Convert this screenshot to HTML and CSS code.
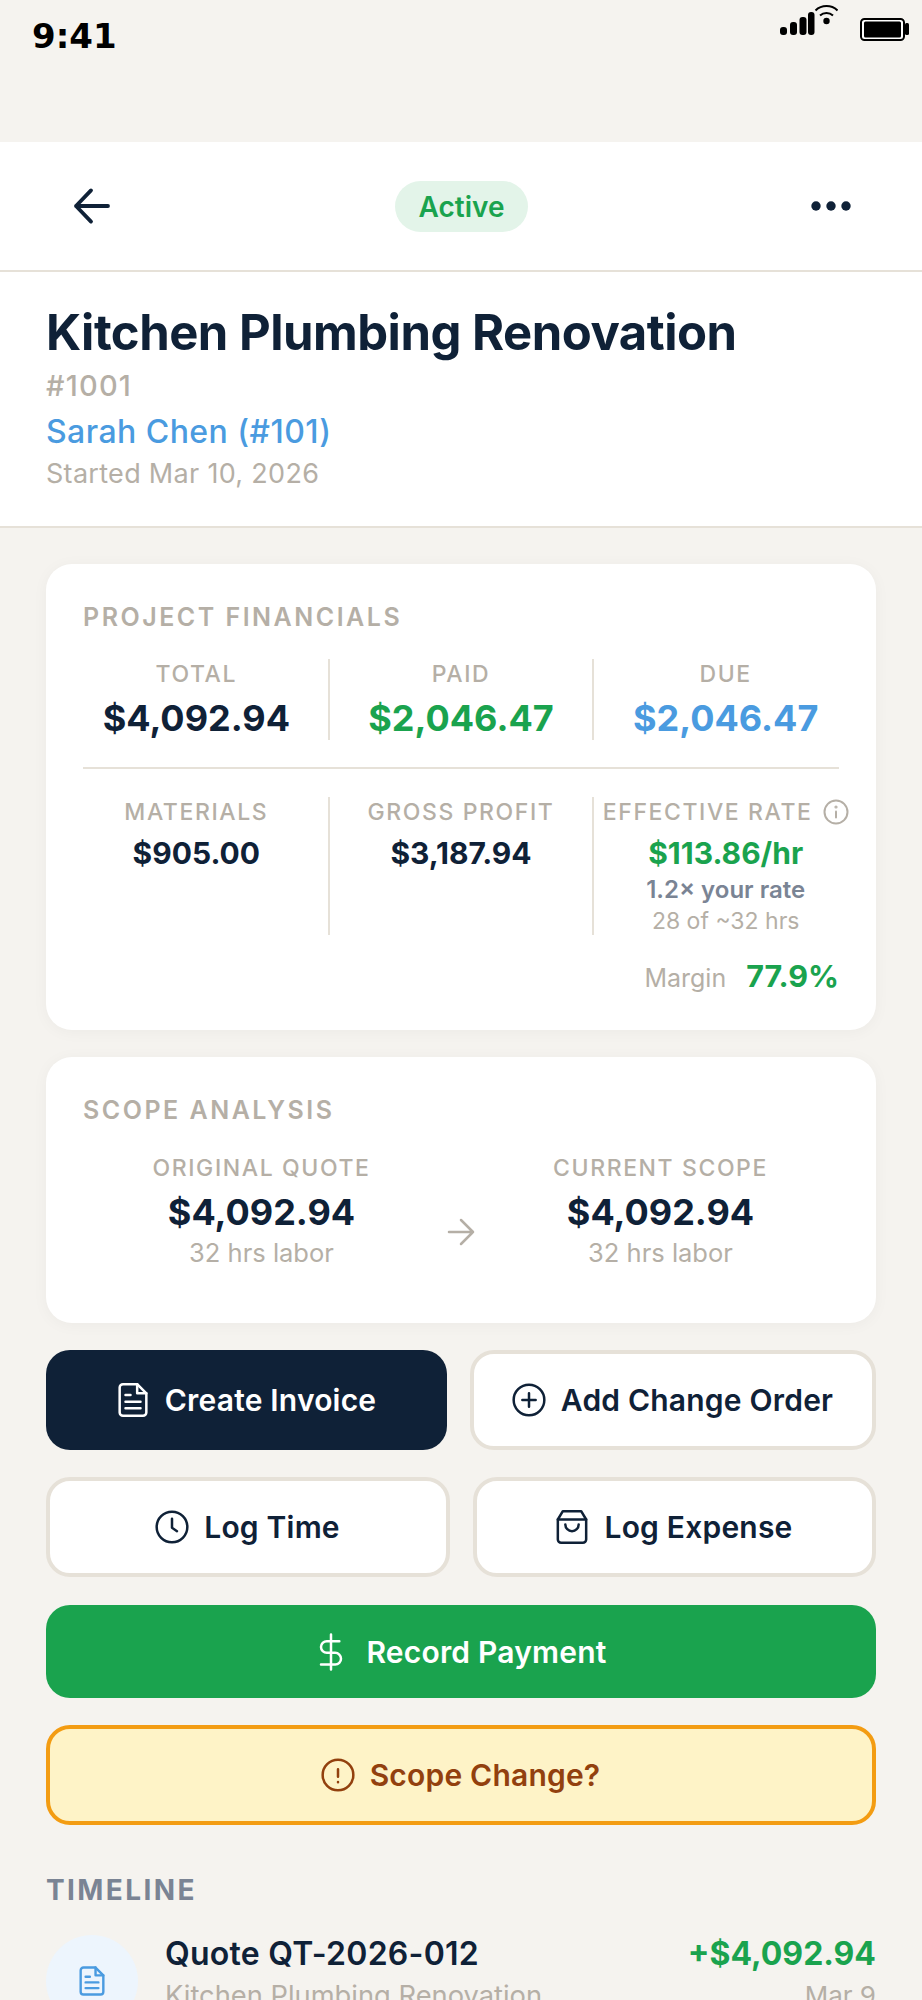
FILE: index.html
```html
<!DOCTYPE html>
<html lang="en">
<head>
<meta charset="utf-8">
<title>Kitchen Plumbing Renovation</title>
<link rel="stylesheet" href="styles.css">
</head>
<body>
<div class="screen">
  <div class="status">
    <span class="time">9:41</span>
    <div class="status-icons">
      <svg class="signal" width="58" height="32" viewBox="0 0 58 32"><g fill="#000"><rect x="0" y="23" width="7" height="8" rx="3"/><rect x="10" y="18" width="7" height="13" rx="3"/><rect x="19.500" y="13" width="7" height="18" rx="3"/><rect x="28" y="8" width="6.500" height="23" rx="3"/></g><g fill="none" stroke="#000" stroke-width="2"><path d="M35.500 6.500a16 16 0 0 1 22 0"/><path d="M40 11.500a9.500 9.500 0 0 1 13 0"/></g><circle cx="46.500" cy="17" r="3.200" fill="#000"/></svg>
      <svg class="battery" width="49" height="23" viewBox="0 0 49 23"><rect x="1" y="1" width="43" height="21" rx="3.500" fill="#fff" stroke="#000" stroke-width="2"/><rect x="4" y="3.500" width="37" height="16" rx="1.500" fill="#000"/><rect x="45" y="5" width="4" height="12" rx="1.500" fill="#000"/></svg>
    </div>
  </div>

  <nav class="nav">
    <svg class="nav-icon" width="48" height="48" viewBox="0 0 24 24" fill="none" stroke="#0F2137" stroke-width="1.900" stroke-linecap="round" stroke-linejoin="round"><path d="M20 12H4M11.500 4.200L4 12l7.500 7.800"/></svg>
    <span class="pill">Active</span>
    <svg class="nav-icon" width="48" height="48" viewBox="0 0 48 48" fill="#0F2137"><circle cx="9" cy="24" r="4.700"/><circle cx="24" cy="24" r="4.700"/><circle cx="39" cy="24" r="4.700"/></svg>
  </nav>

  <header class="head">
    <h1 class="title">Kitchen Plumbing Renovation</h1>
    <div class="ref">#1001</div>
    <div class="client">Sarah Chen (#101)</div>
    <div class="started">Started Mar 10, 2026</div>
  </header>

  <main class="content">
    <section class="card fin">
      <h2 class="card-label">PROJECT FINANCIALS</h2>
      <div class="fin-row">
        <div class="cell"><div class="lab">TOTAL</div><div class="big">$4,092.94</div></div>
        <div class="cell"><div class="lab">PAID</div><div class="big green">$2,046.47</div></div>
        <div class="cell"><div class="lab">DUE</div><div class="big blue">$2,046.47</div></div>
      </div>
      <div class="rule"></div>
      <div class="fin-row">
        <div class="cell"><div class="lab">MATERIALS</div><div class="mid">$905.00</div></div>
        <div class="cell"><div class="lab">GROSS PROFIT</div><div class="mid">$3,187.94</div></div>
        <div class="cell"><div class="lab lab-info">EFFECTIVE RATE<svg class="info" width="26" height="26" viewBox="0 0 26 26" fill="none" stroke="#B5AFA6" stroke-width="2" stroke-linecap="round"><circle cx="13" cy="13" r="11.500"/><path d="M13 12.500v6"/><circle cx="13" cy="8" r=".6"/></svg></div><div class="mid green">$113.86/hr</div><div class="rate">1.2× your rate</div><div class="hrs">28 of ~32 hrs</div></div>
      </div>
      <div class="margin"><span class="margin-lab">Margin</span><span class="margin-val">77.9%</span></div>
    </section>

    <section class="card scope">
      <h2 class="card-label">SCOPE ANALYSIS</h2>
      <div class="scope-row">
        <div class="scope-col"><div class="lab">ORIGINAL QUOTE</div><div class="big">$4,092.94</div><div class="sub">32 hrs labor</div></div>
        <svg class="scope-arrow" width="36" height="36" viewBox="0 0 24 24" fill="none" stroke="#B5AFA6" stroke-width="1.700" stroke-linecap="round" stroke-linejoin="round"><path d="M4 12h16M12 4l8 8-8 8"/></svg>
        <div class="scope-col"><div class="lab">CURRENT SCOPE</div><div class="big">$4,092.94</div><div class="sub">32 hrs labor</div></div>
      </div>
    </section>

    <div class="btn-row row-a">
      <button class="btn dark"><svg width="40" height="40" viewBox="0 0 24 24" fill="none" stroke="#fff" stroke-width="1.500" stroke-linecap="round" stroke-linejoin="round"><path d="M14.500 2.500H6a2 2 0 0 0-2 2v15a2 2 0 0 0 2 2h12a2 2 0 0 0 2-2V8z"/><path d="M14.500 2.500V8H20M7.500 9h3M7.500 13h9M7.500 17h9"/></svg>Create Invoice</button>
      <button class="btn light"><svg width="40" height="40" viewBox="0 0 24 24" fill="none" stroke="#0F2137" stroke-width="1.500" stroke-linecap="round"><circle cx="12" cy="12" r="9.200"/><path d="M12 8v8M8 12h8"/></svg>Add Change Order</button>
    </div>
    <div class="btn-row row-b">
      <button class="btn light"><svg width="40" height="40" viewBox="0 0 24 24" fill="none" stroke="#0F2137" stroke-width="1.500" stroke-linecap="round" stroke-linejoin="round"><circle cx="12" cy="12" r="9.200"/><path d="M12 7v5.500l3 2"/></svg>Log Time</button>
      <button class="btn light"><svg width="40" height="40" viewBox="0 0 24 24" fill="none" stroke="#0F2137" stroke-width="1.500" stroke-linecap="round" stroke-linejoin="round"><path d="M6.500 2.500h11l3 5v12a2 2 0 0 1-2 2h-13a2 2 0 0 1-2-2v-12z"/><path d="M3.500 7.500h17M8 10.500a4 4 0 0 0 8 0"/></svg>Log Expense</button>
    </div>
    <button class="btn pay"><svg width="40" height="40" viewBox="0 0 24 24" fill="none" stroke="#fff" stroke-width="1.500" stroke-linecap="round" stroke-linejoin="round"><path d="M12 1.500v21M17 5.500H9.500a3.500 3.500 0 0 0 0 7h5a3.500 3.500 0 0 1 0 7H6"/></svg>Record Payment</button>
    <button class="btn warn"><svg width="40" height="40" viewBox="0 0 24 24" fill="none" stroke="#92400E" stroke-width="1.500" stroke-linecap="round"><circle cx="12" cy="12" r="9.200"/><path d="M12 8.500V13M12 16.200v.1"/></svg>Scope Change?</button>

    <h2 class="timeline-label">TIMELINE</h2>
    <div class="tl-item">
      <div class="tl-icon"><svg width="34" height="34" viewBox="0 0 24 24" fill="none" stroke="#4A9BE0" stroke-width="1.700" stroke-linecap="round" stroke-linejoin="round"><path d="M14.500 2.500H6a2 2 0 0 0-2 2v15a2 2 0 0 0 2 2h12a2 2 0 0 0 2-2V8z"/><path d="M14.500 2.500V8H20M7.500 9h3M7.500 13h9M7.500 17h9"/></svg></div>
      <div class="tl-body"><div class="tl-title">Quote QT-2026-012</div><div class="tl-sub">Kitchen Plumbing Renovation</div></div>
      <div class="tl-side"><div class="tl-amt">+$4,092.94</div><div class="tl-date">Mar 9</div></div>
    </div>
  </main>
</div>
</body>
</html>
```
FILE: styles.css
```css
* { box-sizing: border-box; }
html, body { margin: 0; padding: 0; }
body { background: #F5F3EF; font-family: Inter, "Liberation Sans", sans-serif; height: 2000px; overflow: hidden; }
.screen { display: flex; flex-direction: column; }

.status { height: 142px; display: flex; justify-content: space-between; padding: 0 13px 0 32px; }
.time { font-family: "DejaVu Sans", sans-serif; font-weight: 700; font-size: 34px; line-height: 40px; margin-top: 16px; }
.status-icons { display: flex; gap: 22px; align-items: flex-start; }
.signal { margin-top: 4px; }
.battery { margin-top: 18px; }

.nav { height: 130px; background: #fff; border-bottom: 2px solid #E6E1D8; display: flex; align-items: center; justify-content: space-between; padding: 0 67px 0 68px; }
.pill { background: #E3F4E9; color: #1AA34E; font-size: 28px; font-weight: 600; padding: 9px 24px 7px; border-radius: 26px; line-height: 35px; }

.head { background: #fff; border-bottom: 2px solid #E6E1D8; padding: 32px 46px 34px; }
.title { margin: 0; font-size: 49px; letter-spacing: -0.5px; line-height: 58px; font-weight: 700; color: #0F2137; }
.ref { font-size: 29px; letter-spacing: 1.200px; font-weight: 500; color: #B5AFA6; line-height: 36px; margin-top: 6px; }
.client { font-size: 32px; letter-spacing: .45px; font-weight: 500; color: #4A9BE0; line-height: 40px; margin-top: 8px; }
.started { font-size: 27px; letter-spacing: .3px; color: #B5AFA6; line-height: 36px; margin-top: 4px; }

.content { padding: 36px 46px 0; display: flex; flex-direction: column; }
.card { background: #fff; border-radius: 26px; box-shadow: 0 2px 16px rgba(0,0,0,.04); }
.card-label { margin: 0; font-size: 25px; font-weight: 600; letter-spacing: 2.5px; color: #B5AFA6; line-height: 30px; }

.fin { padding: 38px 37px 33px; margin-bottom: 27px; }
.fin-row { display: flex; margin-top: 27px; }
.cell { flex: 1 1 0; min-width: 0; padding: 0 18px; text-align: center; border-left: 2px solid #E6E1D8; display: flex; flex-direction: column; align-items: center; }
.cell:first-child { border-left: 0; padding-left: 0; }
.cell:last-child { padding-right: 0; }
.lab { font-size: 23px; font-weight: 500; letter-spacing: 1.600px; color: #B5AFA6; line-height: 30px; white-space: nowrap; }
.big { font-size: 36px; font-weight: 700; color: #0F2137; line-height: 44px; margin-top: 7px; white-space: nowrap; }
.mid { font-size: 30px; font-weight: 700; color: #0F2137; line-height: 38px; margin-top: 7px; white-space: nowrap; }
.green { color: #1AA34E; }
.blue { color: #4A9BE0; }
.rule { height: 2px; background: #E6E1D8; margin-top: 27px; }
.fin-row + .rule + .fin-row { margin-top: 28px; }
.lab-info { display: flex; align-items: center; gap: 10px; }
.info { flex: none; }
.rate { font-size: 24px; font-weight: 600; color: #7A8494; line-height: 30px; margin-top: 3px; white-space: nowrap; }
.hrs { font-size: 23px; color: #B5AFA6; line-height: 28px; margin-top: 2px; white-space: nowrap; }
.margin { display: flex; justify-content: flex-end; align-items: baseline; gap: 20px; margin-top: 22px; line-height: 38px; }
.margin-lab { font-size: 25px; color: #B5AFA6; }
.margin-val { font-size: 30.500px; font-weight: 700; color: #1AA34E; }

.scope { padding: 38px 37px 53px; margin-bottom: 27px; }
.scope-row { display: flex; align-items: center; margin-top: 28px; }
.scope-col { flex: 1; display: flex; flex-direction: column; align-items: center; }
.scope-arrow { flex: none; margin: 40px 3px 0; }
.sub { font-size: 25.500px; color: #B5AFA6; line-height: 34px; margin-top: 2px; }

.btn-row { display: grid; gap: 23px; margin-bottom: 27px; }
.row-a { grid-template-columns: 401fr 406fr; }
.row-b { grid-template-columns: 404fr 403fr; margin-bottom: 28px; }
.btn { font-family: inherit; font-size: 30px; letter-spacing: .2px; font-weight: 600; border-radius: 24px; height: 100px; display: flex; align-items: center; justify-content: center; gap: 12px; padding: 0 4px 0 0; border: 0; }
.dark { background: #0F2137; color: #fff; }
.light { background: #fff; color: #0F2137; border: 4px solid #E6E1D8; }
.pay { background: #1AA34E; color: #fff; height: 93px; margin-bottom: 27px; }
.pay svg { margin-right: 3px; }
.warn { background: #FEF3C7; color: #92400E; border: 4px solid #F39C12; }

.timeline-label { margin: 48px 0 0; font-size: 28px; font-weight: 700; letter-spacing: 2.400px; color: #7A8494; line-height: 34px; }
.tl-item { display: flex; gap: 27px; margin-top: 28px; }
.tl-icon { width: 92px; height: 92px; border-radius: 50%; background: #EDF5FD; display: flex; align-items: center; justify-content: center; flex: none; }
.tl-body { flex: 1; }
.tl-title { font-size: 32px; letter-spacing: .25px; font-weight: 600; color: #0F2137; line-height: 38px; }
.tl-sub { font-size: 27.300px; color: #B5AFA6; line-height: 36px; margin-top: 5px; }
.tl-side { text-align: right; }
.tl-amt { font-size: 32px; font-weight: 700; color: #1AA34E; line-height: 38px; }
.tl-date { font-size: 26px; color: #B5AFA6; line-height: 36px; margin-top: 5px; }
```
